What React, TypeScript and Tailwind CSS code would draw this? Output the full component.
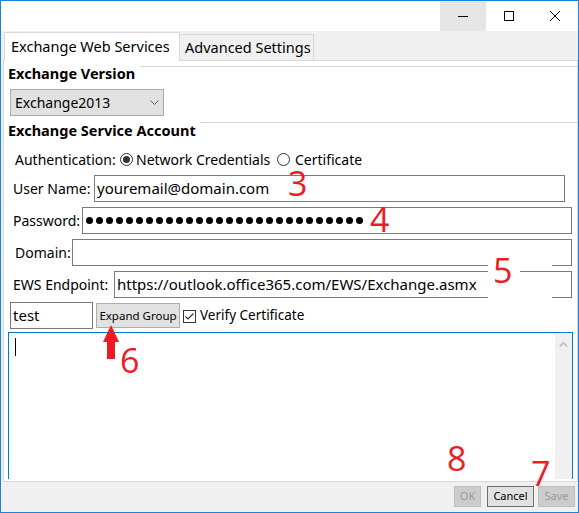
import React from "react";

function Radio({ checked }: { checked?: boolean }) {
  return (
    <span className="w-[13px] h-[13px] rounded-full border border-[#333] flex items-center justify-center shrink-0">
      {checked && <span className="w-[7px] h-[7px] rounded-full bg-[#333]" />}
    </span>
  );
}

function Field({ label, pad, labelW, inputW, children }: { label: string; pad: string; labelW: string; inputW: string; children?: React.ReactNode }) {
  return (
    <div className={`flex items-center h-[27px] mt-[5px] ${pad}`}>
      <span className={`${labelW} shrink-0`}>{label}</span>
      <div className={`${inputW} h-full border border-[#7a7a7a] flex items-center pl-[2px] shrink-0 text-[15px]`}>{children}</div>
    </div>
  );
}

function Mark({ className, n }: { className: string; n: string }) {
  return (
    <span className={`absolute text-[34px] leading-[24px] font-['Open_Sans',sans-serif] text-[#ed1c24] ${className}`}>{n}</span>
  );
}

export default function App() {
  const dots = Array.from({ length: 28 });
  return (
    <div className="relative w-[579px] h-[513px] border border-[#1883d7] bg-[#f0f0f0] flex flex-col overflow-hidden font-['Noto_Sans',sans-serif] text-[14px] text-black">
      {/* title bar */}
      <div className="h-[30px] bg-white flex justify-end shrink-0">
        <div className="w-[46px] h-full bg-[#e5e5e5] flex items-center justify-center">
          <svg width="10" height="10" viewBox="0 0 10 10"><path d="M0 5.5h10" stroke="#000" strokeWidth="1" /></svg>
        </div>
        <div className="w-[46px] h-full flex items-center justify-center">
          <svg width="10" height="10" viewBox="0 0 10 10"><rect x="0.5" y="0.5" width="9" height="9" fill="none" stroke="#000" strokeWidth="1" /></svg>
        </div>
        <div className="w-[46px] h-full flex items-center justify-center">
          <svg width="10" height="10" viewBox="0 0 10 10"><path d="M0 0L10 10M10 0L0 10" stroke="#000" strokeWidth="1" /></svg>
        </div>
      </div>

      {/* tabs */}
      <div className="h-[29px] flex items-end pl-[3px] shrink-0 text-[14.5px]">
        <div className="relative z-10 -mb-px w-[176px] h-[29px] bg-white border-l border-t border-r border-[#d9d9d9] flex items-center pl-[6px] whitespace-nowrap">
          Exchange Web Services
        </div>
        <div className="w-[134px] h-[26px] border-t border-r border-[#d9d9d9] flex items-center pl-[5px] whitespace-nowrap">
          Advanced Settings
        </div>
      </div>

      {/* tab page */}
      <div className="ml-[2px] w-[575px] h-[422px] bg-white border border-[#d9d9d9] flex flex-col shrink-0">
        <div className="mt-[2px] h-[20px] flex">
          <span className="w-[136px] pl-[4px] font-bold leading-[20px] text-[14.5px] whitespace-nowrap">Exchange Version</span>
          <div className="flex-1 mt-[3px] border-t border-[#d5d5d5]" />
        </div>
        <div className="mt-[6px] ml-[6px] w-[154px] h-[27px] bg-[#e1e1e1] border border-[#adadad] flex items-center justify-between pl-[4px] pr-[4px]">
          <span>Exchange2013</span>
          <svg width="9" height="5" viewBox="0 0 9 5"><path d="M0.5 0.5L4.5 4.5L8.5 0.5" fill="none" stroke="#606060" strokeWidth="1" /></svg>
        </div>
        <div className="mt-[4px] h-[20px] flex">
          <span className="w-[196px] pl-[4px] font-bold leading-[20px] text-[14.5px] whitespace-nowrap">Exchange Service Account</span>
          <div className="flex-1 mt-[2px] border-t border-[#d5d5d5]" />
        </div>
        <div className="mt-[9px] h-[20px] flex items-center pl-[11px]">
          <span className="w-[105px] shrink-0">Authentication:</span>
          <Radio checked />
          <span className="w-[144px] pl-[3px] shrink-0">Network Credentials</span>
          <Radio />
          <span className="pl-[5px]">Certificate</span>
        </div>
        <div className="mt-[1px]">
          <Field label="User Name:" pad="pl-[9px]" labelW="w-[81px]" inputW="w-[471px]">youremail@domain.com</Field>
        </div>
        <Field label="Password:" pad="pl-[9px]" labelW="w-[69px]" inputW="w-[490px]">
          <div className="flex gap-[3px] pl-[1px]">
            {dots.map((_, i) => (
              <span key={i} className="w-[7px] h-[7px] rounded-full bg-black" />
            ))}
          </div>
        </Field>
        <Field label="Domain:" pad="pl-[11px]" labelW="w-[57px]" inputW="w-[500px]" />
        <Field label="EWS Endpoint:" pad="pl-[9px]" labelW="w-[101px]" inputW="w-[458px]">
          https://outlook.office365.com/EWS/Exchange.asmx
        </Field>
        <div className="mt-[4px] h-[27px] flex items-start pl-[6px]">
          <div className="w-[83px] h-[27px] border border-[#7a7a7a] flex items-center pl-[2px] text-[15px]">test</div>
          <div className="ml-[3px] mt-[1px] w-[84px] h-[25px] bg-[#e1e1e1] border border-[#adadad] flex items-center justify-center text-[11.5px]">
            Expand Group
          </div>
          <div className="ml-[3px] mt-[8px] w-[13px] h-[13px] border border-[#333] flex items-center justify-center">
            <svg width="11" height="11" viewBox="0 0 11 11"><path d="M1.5 5.5L4 8L9.5 2.5" fill="none" stroke="#333" strokeWidth="1.2" /></svg>
          </div>
          <span className="ml-[4px] leading-[27px] text-[13.5px]">Verify Certificate</span>
        </div>
        <div className="mt-[3px] ml-[4px] mb-[2px] w-[565px] flex-1 border-t border-l border-r border-[#0078d7] flex">
          <div className="flex-1 pt-[5px] pl-[6px]">
            <div className="w-px h-[18px] bg-black" />
          </div>
          <div className="w-[17px] mt-[1px] bg-[#f0f0f0] flex justify-center pt-[7px]">
            <svg width="9" height="6" viewBox="0 0 9 6"><path d="M0 5L4.5 0.5L9 5L7.5 6L4.5 3L1.5 6Z" fill="#c2c2c2" /></svg>
          </div>
        </div>
      </div>

      {/* footer buttons */}
      <div className="flex-1 flex justify-end items-start pt-[4px] pr-[3px] gap-[6px] text-[11px]">
        <div className="w-[27px] h-[21px] bg-[#cccccc] border border-[#bfbfbf] text-[#9a9a9a] flex items-center justify-center">OK</div>
        <div className="w-[47px] h-[21px] bg-[#e1e1e1] border border-[#6e6e6e] flex items-center justify-center">Cancel</div>
        <div className="-ml-[2px] w-[37px] h-[21px] bg-[#cccccc] border border-[#bfbfbf] text-[#9a9a9a] flex items-center justify-center">Save</div>
      </div>

      {/* annotations */}
      <div className="absolute left-[487px] top-[264px] w-[64px] h-[35px] bg-white" />
      <div className="absolute left-[519px] top-[270px] w-[32px] h-px bg-[#7a7a7a]" />
      <svg className="absolute left-[100px] top-[323px]" width="20" height="36" viewBox="0 0 20 36">
        <path d="M10 1L18 18H14V35H6V18H2Z" fill="#ed1c24" />
      </svg>
      <Mark className="left-[287px] top-[170px]" n="3" />
      <Mark className="left-[369px] top-[206px]" n="4" />
      <Mark className="left-[492px] top-[257px]" n="5" />
      <Mark className="left-[119px] top-[347px]" n="6" />
      <Mark className="left-[446px] top-[445px]" n="8" />
      <Mark className="left-[530px] top-[460px]" n="7" />
    </div>
  );
}
